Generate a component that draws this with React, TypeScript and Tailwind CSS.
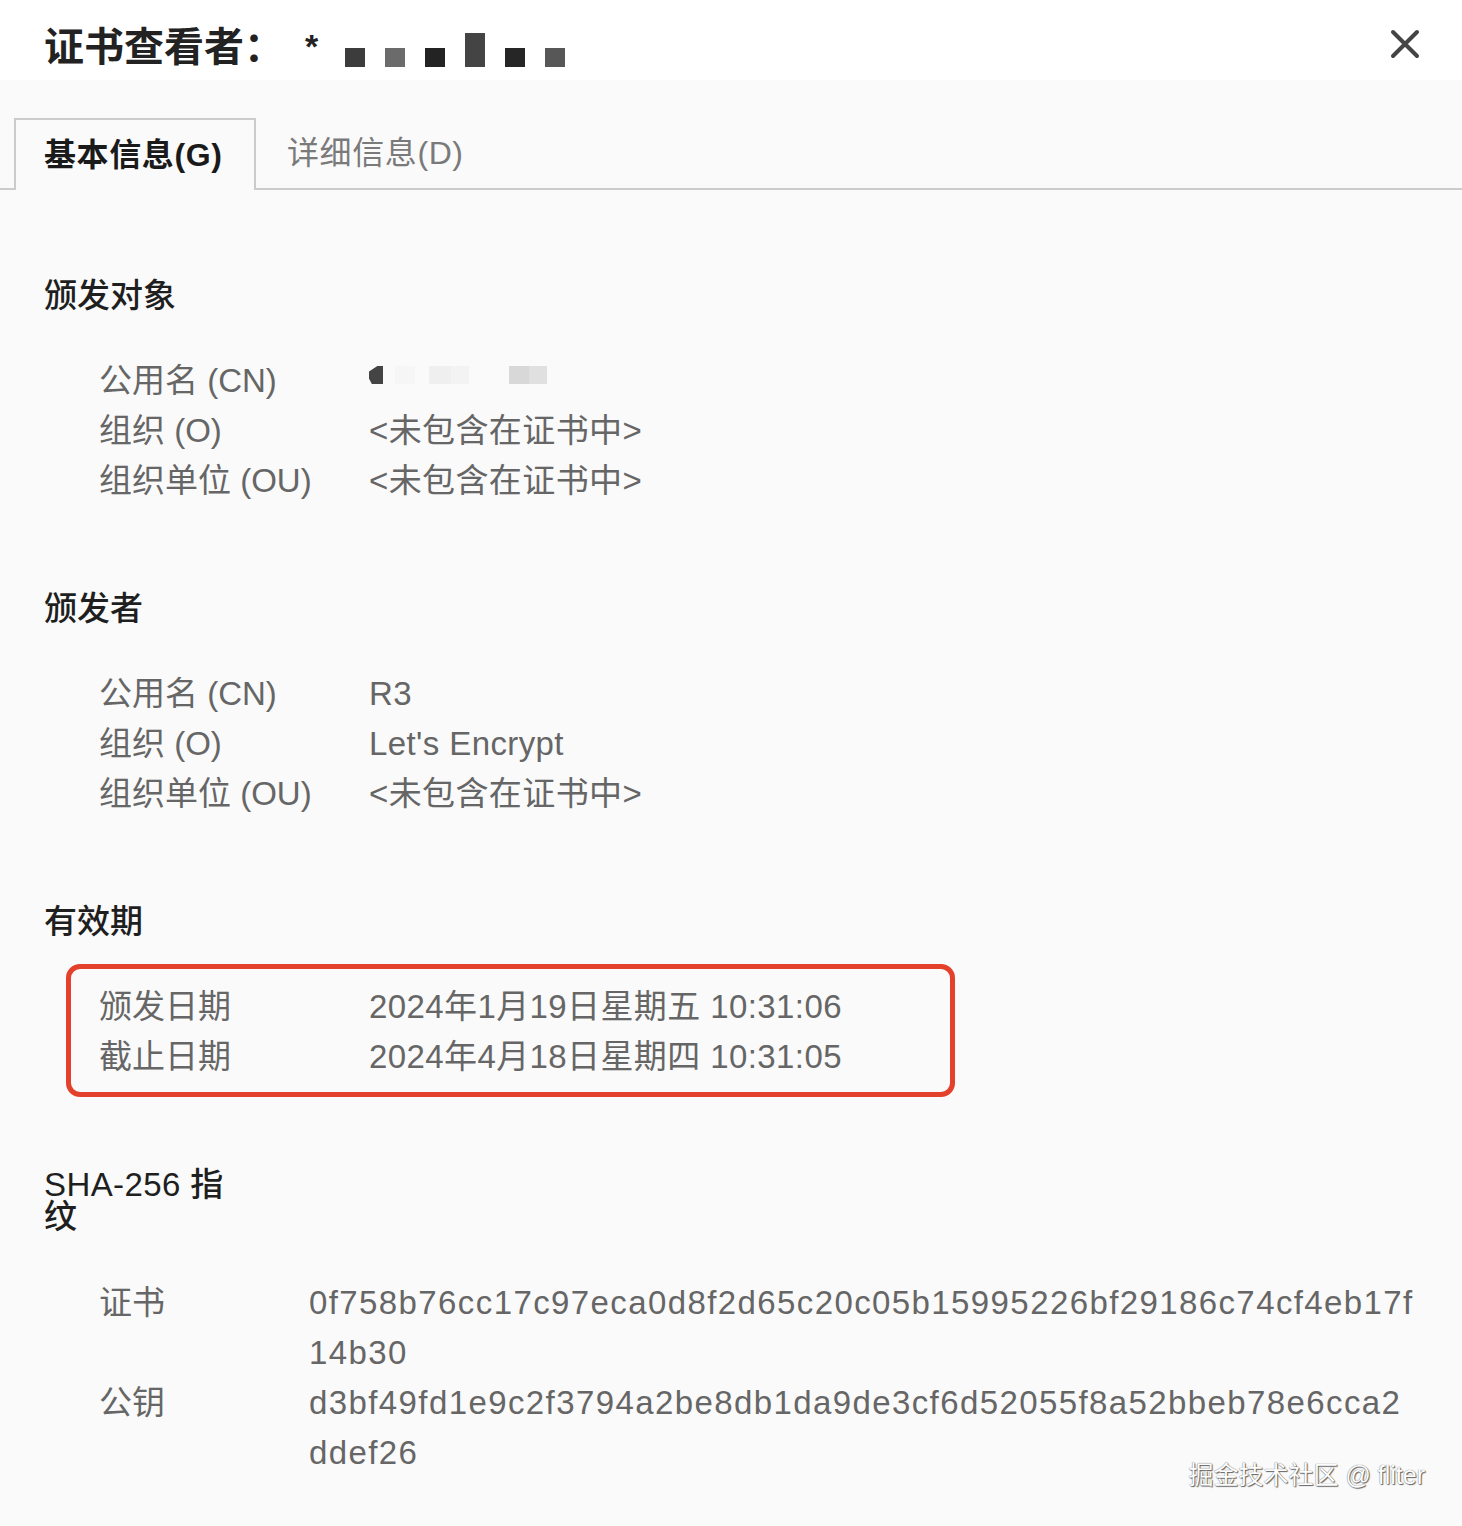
import React from 'react';

const FONT = '[font-family:"Liberation_Sans","Noto_Sans_CJK_SC",sans-serif]';

type Row = { label: string; value: React.ReactNode };

function Section({ title, rows }: { title: string; rows: Row[] }) {
  return (
    <div>
      <h2 className="text-[33px] leading-[40px] font-medium text-[#1f1f1f]">{title}</h2>
      <div className="mt-[40px] pl-[55px]">
        {rows.map((r) => (
          <div key={r.label} className="flex text-[33px] leading-[50px] text-[#666]">
            <div className="w-[270px] shrink-0">{r.label}</div>
            <div className="tracking-[0.4px]">{r.value}</div>
          </div>
        ))}
      </div>
    </div>
  );
}

// pixelated placeholder for the blurred common name
function Redacted() {
  return (
    <span className="inline-flex items-center h-[50px] align-top -mt-[6px]">
      <span className="w-[14px] h-[18px] bg-[#444] [clip-path:polygon(0_30%,60%_0,100%_0,100%_100%,20%_100%,0_70%)]" />
      <span className="w-[20px] h-[18px] bg-[#f6f6f6] ml-[12px]" />
      <span className="w-[22px] h-[18px] bg-[#efefef] ml-[14px]" />
      <span className="w-[18px] h-[18px] bg-[#f3f3f3]" />
      <span className="w-[20px] h-[18px] bg-[#d8d8d8] ml-[40px]" />
      <span className="w-[18px] h-[18px] bg-[#e0e0e0]" />
    </span>
  );
}

function Fingerprint({ label, hex }: { label: string; hex: string }) {
  return (
    <div className="flex text-[33px] leading-[50px] text-[#666]">
      <div className="w-[210px] shrink-0">{label}</div>
      <p className="w-[1106px] break-all tracking-[1.4px]">
        <span>{hex}</span>
      </p>
    </div>
  );
}

const NOT_INCLUDED = '<未包含在证书中>';

export default function App() {
  const blocks = [
    { c: 'bg-[#3c3c3c]', h: 'h-[19px]' },
    { c: 'bg-[#6b6b6b]', h: 'h-[19px]' },
    { c: 'bg-[#232323]', h: 'h-[19px]' },
    { c: 'bg-[#444]', h: 'h-[34px]' },
    { c: 'bg-[#262626]', h: 'h-[19px]' },
    { c: 'bg-[#575757]', h: 'h-[19px]' },
  ];

  return (
    <div className={`relative w-[1462px] min-h-[1526px] bg-[#fafafa] ${FONT}`}>
      {/* title bar */}
      <div className="h-[80px] bg-white flex items-center justify-between pl-[44px] pr-[42px]">
        <div className="flex items-end mt-[14px]">
          <span className="text-[40px] leading-[48px] font-semibold text-[#222]">证书查看者：</span>
          <span className="text-[34px] leading-[40px] font-bold text-[#222] ml-[21px] mb-[5px]">*</span>
          <div className="flex items-end gap-[20px] ml-[27px] mb-[4px]">
            {blocks.map((b, i) => (
              <span key={i} className={`w-[20px] ${b.h} ${b.c}`} />
            ))}
          </div>
        </div>
        <svg width="30" height="30" viewBox="0 0 30 30" className="mt-[8px]">
          <path d="M3 3 L27 27 M27 3 L3 27" stroke="#444" strokeWidth="4" strokeLinecap="round" fill="none" />
        </svg>
      </div>

      {/* tabs */}
      <div className="pt-[38px] border-b-2 border-[#cbcbcb] flex items-end">
        <div className="ml-[14px] w-[242px] h-[72px] -mb-[2px] border-2 border-b-0 border-[#cbcbcb] bg-[#fafafa] flex items-center pl-[28px]">
          <span className="text-[32px] font-bold text-[#1a1a1a] tracking-[0.6px]">基本信息(G)</span>
        </div>
        <div className="h-[70px] flex items-center pl-[31px]">
          <span className="text-[32px] text-[#7a7a7a] tracking-[0.6px]">详细信息(D)</span>
        </div>
      </div>

      {/* content */}
      <div className="pl-[44px] pt-[86px] pb-[49px]">
        <Section
          title="颁发对象"
          rows={[
            { label: '公用名 (CN)', value: <Redacted /> },
            { label: '组织 (O)', value: NOT_INCLUDED },
            { label: '组织单位 (OU)', value: NOT_INCLUDED },
          ]}
        />

        <div className="mt-[83px]">
          <Section
            title="颁发者"
            rows={[
              { label: '公用名 (CN)', value: 'R3' },
              { label: '组织 (O)', value: "Let's Encrypt" },
              { label: '组织单位 (OU)', value: NOT_INCLUDED },
            ]}
          />
        </div>

        <div className="mt-[83px]">
          <h2 className="text-[33px] leading-[40px] font-medium text-[#1f1f1f]">有效期</h2>
          <div className="mt-[22px] ml-[22px] w-[889px] border-[5px] border-[#e4412d] rounded-[14px] pt-[13px] pb-[10px] pl-[28px]">
            <div className="flex text-[33px] leading-[50px] text-[#666]">
              <div className="w-[270px] shrink-0">颁发日期</div>
              <div className="tracking-[0.4px]">2024年1月19日星期五 10:31:06</div>
            </div>
            <div className="flex text-[33px] leading-[50px] text-[#666]">
              <div className="w-[270px] shrink-0">截止日期</div>
              <div className="tracking-[0.4px]">2024年4月18日星期四 10:31:05</div>
            </div>
          </div>
        </div>

        <div className="mt-[72px]">
          <h2 className="w-[200px] text-[33px] leading-[32px] font-medium text-[#1f1f1f] tracking-[0.4px]">SHA-256 指纹</h2>
          <div className="mt-[45px] pl-[55px]">
            <Fingerprint label="证书" hex="0f758b76cc17c97eca0d8f2d65c20c05b15995226bf29186c74cf4eb17f14b30" />
            <Fingerprint label="公钥" hex="d3bf49fd1e9c2f3794a2be8db1da9de3cf6d52055f8a52bbeb78e6cca2ddef26" />
          </div>
        </div>
      </div>

      {/* watermark */}
      <div className="absolute right-[37px] bottom-[37px] text-[25px] leading-[30px] text-white [text-shadow:0_0_1px_#444,1px_1px_1px_#666]">
        掘金技术社区 @ fliter
      </div>
    </div>
  );
}
